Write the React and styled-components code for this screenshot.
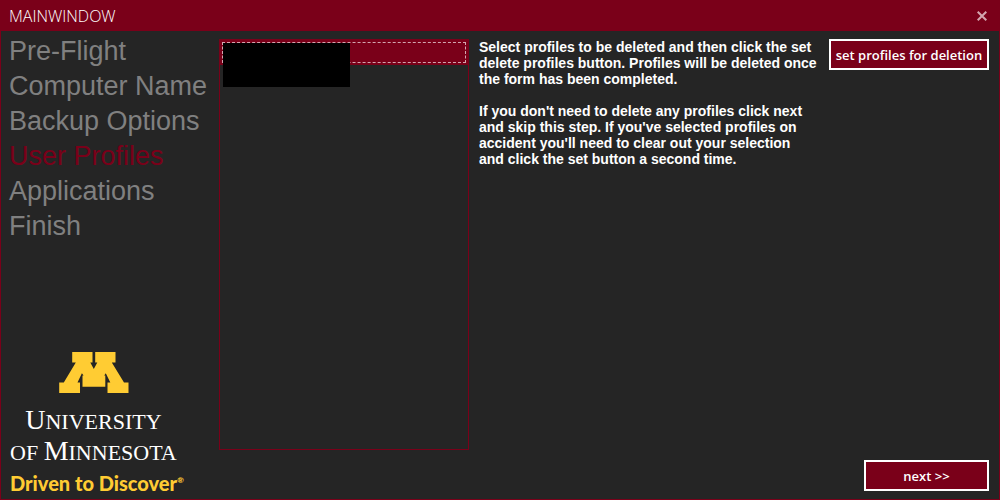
import React from "react";
import styled, { createGlobalStyle } from "styled-components";

const maroon = "#7a0019";
const gold = "#ffcc33";

const GlobalStyle = createGlobalStyle`
  *, *::before, *::after { box-sizing: border-box; }
  body { margin: 0; background: #252525; }
`;

const Window = styled.div`
  display: flex;
  flex-direction: column;
  min-height: 100vh;
  border: 1px solid ${maroon};
  background: #252525;
  color: #fff;
  font-family: "Liberation Sans", Arial, sans-serif;
`;

const TitleBar = styled.header`
  display: flex;
  align-items: center;
  justify-content: space-between;
  height: 30px;
  padding: 0 7px 0 8px;
  background: ${maroon};
`;

const Title = styled.h1`
  margin: 0;
  font: 300 16px/30px "Open Sans", sans-serif;
`;

const CloseButton = styled.button`
  display: flex;
  align-items: center;
  justify-content: center;
  width: 20px;
  height: 20px;
  padding: 0;
  border: 0;
  background: none;
  color: #d3a6af;
`;

const Body = styled.div`
  flex: 1;
  display: grid;
  grid-template-columns: 218px minmax(200px, 250px) minmax(0, 1fr);
`;

const Sidebar = styled.aside`
  display: flex;
  flex-direction: column;
  justify-content: space-between;
  padding: 3px 8px 4px;
`;

const Steps = styled.ol`
  margin: 0;
  padding: 0;
  list-style: none;
`;

const Step = styled.li`
  color: ${(p) => (p.$current ? maroon : "#808080")};
  font-size: 27px;
  line-height: 35px;
  white-space: nowrap;
`;

const Brand = styled.div`
  display: flex;
  flex-direction: column;
  align-items: flex-start;
  padding-left: 1px;
  white-space: nowrap;
`;

const Mark = styled.svg`
  display: block;
  margin: 0 0 13px 49px;
`;

const Wordmark = styled.p`
  display: flex;
  flex-direction: column;
  align-items: center;
  margin: 0;
  font: 22px/30px "Liberation Serif", "Times New Roman", serif;
`;

const Cap = styled.span`
  font-size: 28px;
  line-height: 1;
`;

const Tagline = styled.p`
  margin: 3px 0 0;
  color: ${gold};
  font: 900 20px/24px Lato, sans-serif;
`;

const Registered = styled.sup`
  font-size: 8px;
  line-height: 1;
`;

const ProfileList = styled.ul`
  align-self: stretch;
  margin: 8px 0 49px;
  padding: 0;
  border: 1px solid ${maroon};
  list-style: none;
`;

const Profile = styled.li`
  position: relative;
  height: 25px;
  padding: 2px;
  background: ${maroon};
`;

const FocusFrame = styled.div`
  height: 21px;
  border: 1px dashed #d3a6af;
`;

const Redaction = styled.div`
  position: absolute;
  top: 3px;
  left: 3px;
  width: 127px;
  height: 44px;
  background: #000;
`;

const Main = styled.main`
  display: flex;
  flex-direction: column;
  justify-content: space-between;
  padding: 8px 10px;
`;

const Intro = styled.div`
  display: flex;
  align-items: flex-start;
  justify-content: space-between;
  gap: 8px;
`;

const Help = styled.div`
  flex: 1;
  max-width: 339px;
`;

const Paragraph = styled.p`
  margin: 0 0 16px;
  font-size: 14px;
  font-weight: 700;
  line-height: 16px;
`;

const ActionButton = styled.button`
  flex: none;
  align-self: ${(p) => (p.$end ? "flex-end" : "flex-start")};
  width: ${(p) => (p.$end ? 125 : 160)}px;
  height: 31px;
  padding: 0;
  border: 2px solid #fff;
  background: ${maroon};
  color: #fff;
  font: 600 13px/24px "Open Sans", sans-serif;
  white-space: nowrap;
`;

const steps = ["Pre-Flight", "Computer Name", "Backup Options", "User Profiles", "Applications", "Finish"];
const current = "User Profiles";

export default function App() {
  return (
    <Window>
      <GlobalStyle />
      <TitleBar>
        <Title>MAINWINDOW</Title>
        <CloseButton aria-label="Close">
          <svg width="10" height="10" viewBox="0 0 10 10" stroke="currentColor" strokeWidth="2" aria-hidden="true">
            <path d="M.7.7 9.3 9.3M9.3.7.7 9.3" />
          </svg>
        </CloseButton>
      </TitleBar>
      <Body>
        <Sidebar>
          <Steps>
            {steps.map((s) => (
              <Step key={s} $current={s === current} aria-current={s === current ? "step" : undefined}>
                {s}
              </Step>
            ))}
          </Steps>
          <Brand>
            <Mark width="70" height="41" viewBox="0 0 70 41" fill={gold} aria-hidden="true">
              <path d="M13.2 0H33.5V10.5H31.3L34.8 17L38.3 10.5H36.2V0H56.5V10.5H52.8L65 30.5H69.5V41H48.5V30.5H51.3L46.8 21.2L45.2 23.5H46.3V34.8H23.5V23.5H24.6L22.9 21.2L18.5 30.5H21V41H0.2V30.5H4.8L16.8 10.5H13.2Z" />
            </Mark>
            <Wordmark>
              <span><Cap>U</Cap>NIVERSITY</span>
              <span>OF <Cap>M</Cap>INNESOTA</span>
            </Wordmark>
            <Tagline>Driven to Discover<Registered>®</Registered></Tagline>
          </Brand>
        </Sidebar>
        <ProfileList role="listbox" aria-label="Profiles" aria-multiselectable="true">
          <Profile role="option" aria-selected="true" tabIndex={0}>
            <FocusFrame />
            <Redaction />
          </Profile>
        </ProfileList>
        <Main>
          <Intro>
            <Help>
              <Paragraph>
                Select profiles to be deleted and then click the set delete profiles button. Profiles will be deleted
                once the form has been completed.
              </Paragraph>
              <Paragraph>
                If you don't need to delete any profiles click next and skip this step. If you've selected profiles on
                accident you'll need to clear out your selection and click the set button a second time.
              </Paragraph>
            </Help>
            <ActionButton>set profiles for deletion</ActionButton>
          </Intro>
          <ActionButton $end>next &gt;&gt;</ActionButton>
        </Main>
      </Body>
    </Window>
  );
}
